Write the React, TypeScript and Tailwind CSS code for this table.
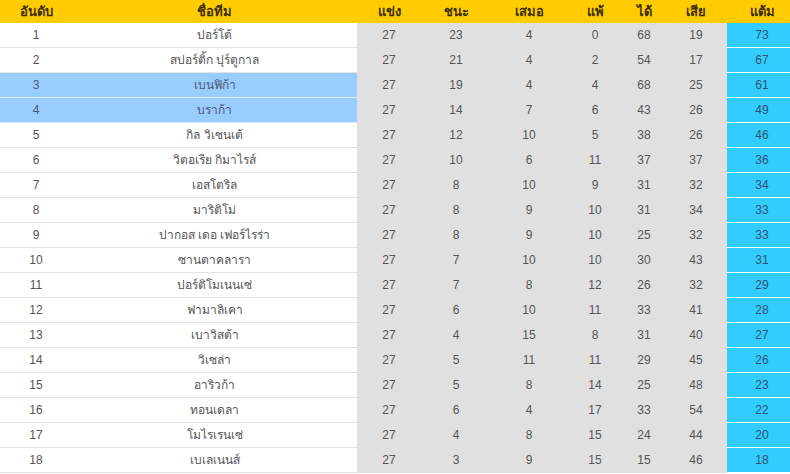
import React from "react";

const rows: [number, string, number, number, number, number, number, number, number][] = [
  [1, "ปอร์โต้", 27, 23, 4, 0, 68, 19, 73],
  [2, "สปอร์ติ้ก ปุร์ตูกาล", 27, 21, 4, 2, 54, 17, 67],
  [3, "เบนฟิก้า", 27, 19, 4, 4, 68, 25, 61],
  [4, "บราก้า", 27, 14, 7, 6, 43, 26, 49],
  [5, "กิล วิเซนเต้", 27, 12, 10, 5, 38, 26, 46],
  [6, "วิตอเรีย กิมาไรส์", 27, 10, 6, 11, 37, 37, 36],
  [7, "เอสโตริล", 27, 8, 10, 9, 31, 32, 34],
  [8, "มาริติโม่", 27, 8, 9, 10, 31, 34, 33],
  [9, "ปากอส เดอ เฟอร์ไรร่า", 27, 8, 9, 10, 25, 32, 33],
  [10, "ซานตาคลารา", 27, 7, 10, 10, 30, 43, 31],
  [11, "ปอร์ติโมเนนเซ่", 27, 7, 8, 12, 26, 32, 29],
  [12, "ฟามาลิเคา", 27, 6, 10, 11, 33, 41, 28],
  [13, "เบาวิสต้า", 27, 4, 15, 8, 31, 40, 27],
  [14, "วิเซล่า", 27, 5, 11, 11, 29, 45, 26],
  [15, "อาริวก้า", 27, 5, 8, 14, 25, 48, 23],
  [16, "ทอนเดลา", 27, 6, 4, 17, 33, 54, 22],
  [17, "โมไรเรนเซ่", 27, 4, 8, 15, 24, 44, 20],
  [18, "เบเลเนนส์", 27, 3, 9, 15, 15, 46, 18],
];

export default function App() {
  return (
    <div className="w-[790px] h-[474px] bg-white overflow-hidden font-['Liberation_Sans',Tahoma,sans-serif]">
      <div className="flex h-[23px] bg-[#ffcc00] text-[13px] font-bold text-[color:#3d3000] leading-[23px]">
        <div className="w-[72px] text-center">อันดับ</div>
        <div className="w-[285px] text-center">ชื่อทีม</div>
        <div className="w-[64px] text-center">แข่ง</div>
        <div className="w-[70px] text-center">ชนะ</div>
        <div className="w-[76px] text-center">เสมอ</div>
        <div className="w-[56px] text-center">แพ้</div>
        <div className="w-[42px] text-center">ได้</div>
        <div className="w-[62px] text-center">เสีย</div>
        <div className="w-[63px] text-center pl-[7px]">แต้ม</div>
      </div>
      {rows.map((r) => {
        const hl = r[0] === 3 || r[0] === 4;
        const left = hl
          ? "bg-[#99ccff] border-b border-[#dcecff] text-[#4a5a70]"
          : "bg-white border-b border-[#e2e2e2] text-[#555]";
        return (
          <div key={r[0]} className="flex h-[25px] text-[12px] leading-[24px]">
            <div className={`w-[72px] text-center ${left}`}>{r[0]}</div>
            <div className={`w-[285px] text-center ${left} ${hl ? "text-[#2f3f5c]" : "text-[#2a2a2a]"}`}>{r[1]}</div>
            <div className="flex bg-[#e0e0e0] text-[#555]">
              <div className="w-[64px] text-center">{r[2]}</div>
              <div className="w-[70px] text-center">{r[3]}</div>
              <div className="w-[76px] text-center">{r[4]}</div>
              <div className="w-[56px] text-center">{r[5]}</div>
              <div className="w-[42px] text-center">{r[6]}</div>
              <div className="w-[62px] text-center">{r[7]}</div>
            </div>
            <div className="w-[63px] text-center pl-[7px] bg-[#33ccff] border-b border-white text-[#2d5470]">{r[8]}</div>
          </div>
        );
      })}
    </div>
  );
}
